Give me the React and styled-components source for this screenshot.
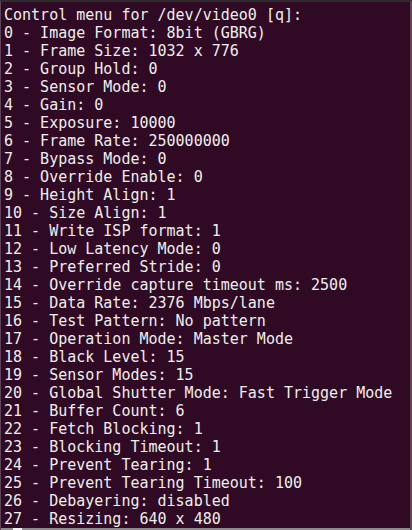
import React from 'react';
import styled, { createGlobalStyle } from 'styled-components';

const Global = createGlobalStyle`
    html, body {
        margin: 0;
        padding: 0;
        background: #300a24;
    }
`;

const lines = [
    'Control menu for /dev/video0 [q]:',
    '0 - Image Format: 8bit (GBRG)',
    '1 - Frame Size: 1032 x 776',
    '2 - Group Hold: 0',
    '3 - Sensor Mode: 0',
    '4 - Gain: 0',
    '5 - Exposure: 10000',
    '6 - Frame Rate: 250000000',
    '7 - Bypass Mode: 0',
    '8 - Override Enable: 0',
    '9 - Height Align: 1',
    '10 - Size Align: 1',
    '11 - Write ISP format: 1',
    '12 - Low Latency Mode: 0',
    '13 - Preferred Stride: 0',
    '14 - Override capture timeout ms: 2500',
    '15 - Data Rate: 2376 Mbps/lane',
    '16 - Test Pattern: No pattern',
    '17 - Operation Mode: Master Mode',
    '18 - Black Level: 15',
    '19 - Sensor Modes: 15',
    '20 - Global Shutter Mode: Fast Trigger Mode',
    '21 - Buffer Count: 6',
    '22 - Fetch Blocking: 1',
    '23 - Blocking Timeout: 1',
    '24 - Prevent Tearing: 1',
    '25 - Prevent Tearing Timeout: 100',
    '26 - Debayering: disabled',
    '27 - Resizing: 640 x 480',
];

function App() {
    return (
        <>
            <Global />
            <Terminal>
                <Screen>
                    {lines.map((l, i) => (
                        <Line key={i}>{l}</Line>
                    ))}
                </Screen>
                <Bottom>
                    <Cursor />
                </Bottom>
            </Terminal>
        </>
    );
}

export default App;

const Terminal = styled.div`
    width: 412px;
    height: 530px;
    box-sizing: border-box;
    background: #300a24;
    border-top: 2px solid #2f2a2c;
    border-left: 1px solid #5e4458;
    border-right: 2px solid #5a4a56;
    display: flex;
    flex-direction: column;
    overflow: hidden;
`;

const Screen = styled.div`
    flex: 1;
    padding: 4px 0 0 3px;
    font-family: "DejaVu Sans Mono", "Liberation Mono", monospace;
    font-size: 15px;
    line-height: 18px;
    color: #eeeeec;
    white-space: pre;
`;

const Line = styled.div`
    height: 18px;
`;

const Bottom = styled.div`
    height: 3px;
    background: #8c8a8c;
    padding-left: 12px;
`;

const Cursor = styled.div`
    width: 9px;
    height: 3px;
    background: #f4f4f4;
`;
